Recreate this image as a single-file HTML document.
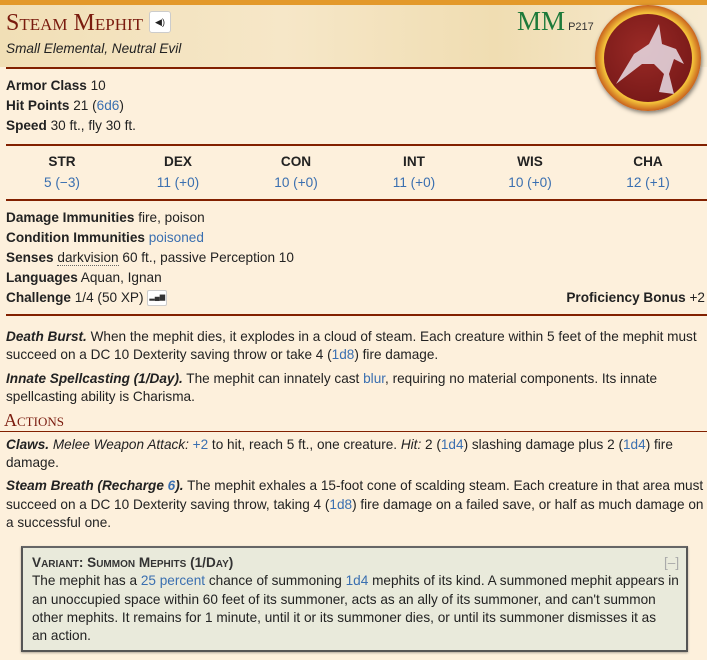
<!DOCTYPE html>
<html><head><meta charset="utf-8"><style>
body{margin:0;width:707px;height:660px;overflow:hidden;background:#fdf0dc;font-family:"Liberation Sans",sans-serif;color:#222;font-size:13.6px;letter-spacing:0}
.l{position:absolute;left:6px;white-space:nowrap;line-height:16px}
b{font-weight:bold}
a{color:#3a6fb0;text-decoration:none}
.rule{position:absolute;left:6px;height:2px;background:#822000}
.hdr{position:absolute;left:0;top:5px;width:707px;height:62px;background:linear-gradient(90deg,#f1dfb6,#f6e7c8 40%,#f0ddb2 70%,#f7ebd2)}
.sc{font-family:"Liberation Serif",serif;font-variant:small-caps;color:#7a1b0e;letter-spacing:0}
.st{position:absolute;text-align:center;width:80px;line-height:16px}
</style></head><body>
<div style="position:absolute;left:0;top:0;width:707px;height:5px;background:#e3992b"></div>
<div class="hdr"></div>
<div class="l sc" style="top:9px;font-size:24px;line-height:28px">Steam Mephit</div>
<div style="position:absolute;left:149px;top:11px;width:20px;height:20px;background:#fff;border:1px solid #ccc;border-radius:3px;font-size:9px;text-align:center;line-height:20px">◀)</div>
<div class="l" style="top:41px;font-style:italic">Small Elemental, Neutral Evil</div>
<div style="position:absolute;left:517px;top:6px;font-family:'Liberation Serif',serif;font-size:27px;color:#1e7a3a;letter-spacing:0">MM<span style="font-family:'Liberation Sans',sans-serif;font-size:11px;color:#333"> P217</span></div>
<div class="rule" style="top:67px;width:600px"></div>
<div style="position:absolute;left:595px;top:5px;width:106px;height:106px;border-radius:50%;background:radial-gradient(circle,#f3c03a 60%,#c2561a 72%,#7a2a08 100%);box-shadow:1px 2px 4px rgba(0,0,0,.5)"></div>
<div style="position:absolute;left:604px;top:14px;width:88px;height:88px;border-radius:50%;background:radial-gradient(circle at 45% 40%,#9a2a26,#6e1414)"></div>
<svg style="position:absolute;left:604px;top:14px" width="88" height="88"><path d="M12 70 L30 40 L45 30 L55 10 L58 30 L72 35 L80 50 L70 45 L65 60 L70 80 L55 78 L60 60 L50 50 L38 50 Z" fill="#e8dde6" opacity=".85"/></svg>
<div class="l" style="top:78px"><b>Armor Class</b> 10</div>
<div class="l" style="top:98px"><b>Hit Points</b> 21 (<a>6d6</a>)</div>
<div class="l" style="top:118px"><b>Speed</b> 30 ft., fly 30 ft.</div>
<div class="rule" style="top:144px;width:701px"></div>
<div class="st" style="left:22px;top:154px"><b>STR</b><br><a style="line-height:26px">5 (−3)</a></div>
<div class="st" style="left:138px;top:154px"><b>DEX</b><br><a style="line-height:26px">11 (+0)</a></div>
<div class="st" style="left:256px;top:154px"><b>CON</b><br><a style="line-height:26px">10 (+0)</a></div>
<div class="st" style="left:374px;top:154px"><b>INT</b><br><a style="line-height:26px">11 (+0)</a></div>
<div class="st" style="left:490px;top:154px"><b>WIS</b><br><a style="line-height:26px">10 (+0)</a></div>
<div class="st" style="left:608px;top:154px"><b>CHA</b><br><a style="line-height:26px">12 (+1)</a></div>
<div class="rule" style="top:199px;width:701px"></div>
<div class="l" style="top:210px"><b>Damage Immunities</b> fire, poison</div>
<div class="l" style="top:230px"><b>Condition Immunities</b> <a>poisoned</a></div>
<div class="l" style="top:250px"><b>Senses</b> <span style="border-bottom:1px dotted #666">darkvision</span> 60 ft., passive Perception 10</div>
<div class="l" style="top:270px"><b>Languages</b> Aquan, Ignan</div>
<div class="l" style="top:290px"><b>Challenge</b> 1/4 (50 XP) <span style="display:inline-block;width:18px;height:14px;border:1px solid #ccc;background:#fff;border-radius:2px;vertical-align:middle;font-size:7px;text-align:center;line-height:14px;color:#333">▂▄▆</span></div>
<div class="l" style="top:290px;left:auto;right:2px"><b>Proficiency Bonus</b> +2</div>
<div class="rule" style="top:314px;width:701px"></div>
<div class="l" style="top:329px"><b><i>Death Burst.</i></b> When the mephit dies, it explodes in a cloud of steam. Each creature within 5 feet of the mephit must</div>
<div class="l" style="top:347px">succeed on a DC 10 Dexterity saving throw or take 4 (<a>1d8</a>) fire damage.</div>
<div class="l" style="top:371px"><b><i>Innate Spellcasting (1/Day).</i></b> The mephit can innately cast <a>blur</a>, requiring no material components. Its innate</div>
<div class="l" style="top:389px">spellcasting ability is Charisma.</div>
<div class="l sc" style="top:410px;left:4px;font-size:18px;line-height:20px">Actions</div>
<div style="position:absolute;left:0;top:431px;width:707px;height:1px;background:#822000"></div>
<div class="l" style="top:437px"><b><i>Claws.</i></b> <i>Melee Weapon Attack:</i> <a>+2</a> to hit, reach 5 ft., one creature. <i>Hit:</i> 2 (<a>1d4</a>) slashing damage plus 2 (<a>1d4</a>) fire</div>
<div class="l" style="top:455px">damage.</div>
<div class="l" style="top:478px"><b><i>Steam Breath (Recharge <a>6</a>).</i></b> The mephit exhales a 15-foot cone of scalding steam. Each creature in that area must</div>
<div class="l" style="top:497px">succeed on a DC 10 Dexterity saving throw, taking 4 (<a>1d8</a>) fire damage on a failed save, or half as much damage on</div>
<div class="l" style="top:515px">a successful one.</div>
<div style="position:absolute;left:21px;top:546px;width:663px;height:102px;background:#e9eadb;border:2px solid #555;border-top-color:#666;box-shadow:0 1px 2px rgba(0,0,0,.3)"></div>
<div class="l" style="top:555px;left:32px;font-variant:small-caps;font-weight:bold;color:#333">Variant: Summon Mephits (1/Day)</div>
<div class="l" style="top:555px;left:664px;color:#aaa">[–]</div>
<div class="l" style="top:573px;left:32px">The mephit has a <a>25 percent</a> chance of summoning <a>1d4</a> mephits of its kind. A summoned mephit appears in</div>
<div class="l" style="top:592px;left:32px">an unoccupied space within 60 feet of its summoner, acts as an ally of its summoner, and can't summon</div>
<div class="l" style="top:610px;left:32px">other mephits. It remains for 1 minute, until it or its summoner dies, or until its summoner dismisses it as</div>
<div class="l" style="top:628px;left:32px">an action.</div>
</body></html>
